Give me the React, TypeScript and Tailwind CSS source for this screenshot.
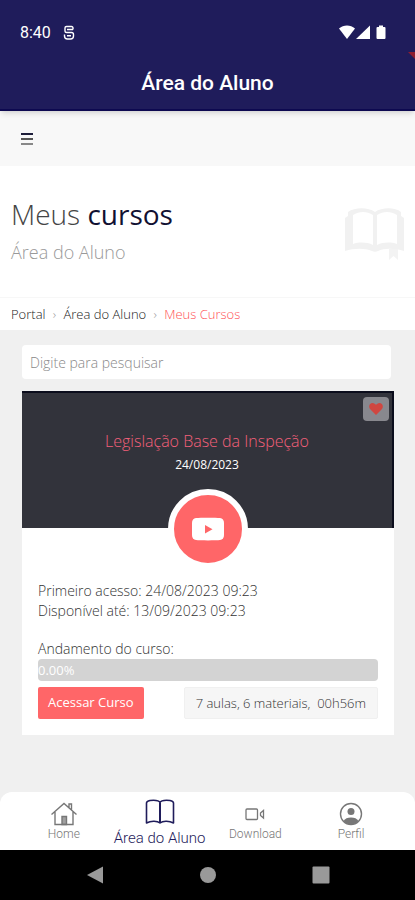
import { useState } from 'react'
import type { ReactNode } from 'react'

interface NavItem {
  label: string
  icon: ReactNode
}

const navItems: NavItem[] = [
  {
    label: 'Home',
    icon: (
      <svg className="w-7 h-6" viewBox="0 0 28 24" fill="none" stroke="currentColor" strokeWidth="1.4">
        <path d="M1.500 12.500L14 1.500l12.500 11M5 10v12.500h18V10M19 5.500V2h2.500v6" />
        <path d="M12 22.500v-8h4.500v8z" fill="currentColor" fillOpacity="0.7" />
      </svg>
    ),
  },
  {
    label: 'Área do Aluno',
    icon: (
      <svg className="w-8 h-7" viewBox="0 0 32 28" fill="none" stroke="currentColor" strokeWidth="1.6" strokeLinejoin="round">
        <path d="M16 4.500C15 2.500 11 2 6 2.500 3.500 3 2.500 3.500 2.500 5v20c4-2 10.500-2.500 13.500 0 3-2.500 9.500-2 13.500 0V5c0-1.500-1-2-3.500-2.500C21 2 17 2.500 16 4.500z" />
        <path d="M16 4.500v20.500" strokeWidth="2" />
      </svg>
    ),
  },
  {
    label: 'Download',
    icon: (
      <svg className="w-5 h-6" viewBox="0 0 20 24" fill="none" stroke="currentColor" strokeWidth="1.300">
        <rect x="1" y="7" width="11.500" height="10.500" rx="1" />
        <path d="M15.500 11l3-2.500v7.500l-3-2.500z" />
      </svg>
    ),
  },
  {
    label: 'Perfil',
    icon: (
      <svg className="w-6 h-6" viewBox="0 0 24 24" fill="none" stroke="currentColor" strokeWidth="1.400">
        <circle cx="12" cy="12" r="10.500" />
        <circle cx="12" cy="9.500" r="3.500" fill="currentColor" stroke="none" />
        <path d="M4.500 19c1.500-2.500 4-3.500 7.500-3.500s6 1 7.500 3.500c-4 4.500-11 4.500-15 0z" fill="currentColor" stroke="none" />
      </svg>
    ),
  },
]

function StatusBar() {
  return (
    <div className="flex items-center justify-between h-7 pl-5 pr-7 text-white">
      <div className="flex items-center gap-3">
        <span className="text-base leading-5">8:40</span>
        <svg className="w-3 h-4" viewBox="0 0 12 16" fill="none" stroke="currentColor" strokeWidth="1.400">
          <path d="M10 4.500V3c0-1-.5-1.500-1.500-1.500h-5C2.500 1.500 2 2 2 3v3c0 1 .5 1.500 1.500 1.500h5c1.500 0 2 .5 2 2V11c0 2-1.500 3-3 3h-3C3 14 1.500 13 1.500 11V9.500M4 4.500h6M4 10.700h4" />
        </svg>
      </div>
      <svg className="w-12 h-4" viewBox="0 0 48 16" fill="currentColor">
        <path d="M0 3.500C4.500-.5 11.500-.5 16 3.500L8 14z" />
        <path d="M31 .5v13.500H17z" />
        <path d="M38.500 2h1.500V.5h4V2h1.500a1 1 0 0 1 1 1v10a1 1 0 0 1-1 1h-7a1 1 0 0 1-1-1V3a1 1 0 0 1 1-1z" />
      </svg>
    </div>
  )
}

function AppHeader() {
  return (
    <header className="relative z-10 bg-[#1f1c5b] border-b-2 border-[#0d0950] pt-[19px] shadow-md font-[Roboto,sans-serif]">
      <StatusBar />
      <h1 className="pt-6 pb-[14px] text-center text-[21px] leading-6 font-medium text-white">Área do Aluno</h1>
      <svg className="absolute right-0 top-13 w-2 h-2" viewBox="0 0 8 8">
        <path d="M1 0h7v7z" fill="#8f1c30" />
      </svg>
    </header>
  )
}

function PageTitle() {
  return (
    <section className="flex items-start justify-between bg-white pl-[11px] pr-2 pt-7 pb-[29px]">
      <div>
        <h2 className="text-[28px] leading-10 font-light text-[#444]">
          Meus <span className="font-normal text-[#111132]">cursos</span>
        </h2>
        <p className="mt-0.5 text-lg leading-8 font-light text-[#999]">Área do Aluno</p>
      </div>
      <svg className="mt-3 w-16 h-14" viewBox="0 0 64 56">
        <path
          d="M2 12l3-2V6c7-5 20-5 27 0 7-5 20-5 26 0v4l3 2v33c-9-3-20-3-26 0-2 1-4 1-6 0-7-3-18-3-27 0zM10 9v29c6-2 14-2 20 1V9c-6-4-14-4-20 0zM34 9v30c6-3 14-3 20-1V9c-6-4-14-4-20 0z"
          fill="#f1f1f1"
          fillRule="evenodd"
        />
        <path d="M46 43h9v11l-4.500-4-4.500 4z" fill="#f3f3f3" />
      </svg>
    </section>
  )
}

function Breadcrumb() {
  return (
    <nav aria-label="Breadcrumb" className="bg-white border-t border-[#f7f7f7] px-[11px] py-2">
      <ol className="flex items-center text-[13px] leading-4 font-light text-[#222]">
        <li><a href="#portal">Portal</a></li>
        <li aria-hidden="true" className="w-[18px] text-center text-[#999]">›</li>
        <li><a href="#area">Área do Aluno</a></li>
        <li aria-hidden="true" className="w-[18px] text-center text-[#999]">›</li>
        <li><a href="#cursos" className="text-[#ff5055]">Meus Cursos</a></li>
      </ol>
    </nav>
  )
}

function CourseCard() {
  const [favorite, setFavorite] = useState<boolean>(true)

  return (
    <article className="bg-white text-[#333]">
      <div className="relative flex flex-col items-center bg-[#32333b] border-t-2 border-r-2 border-[#0b0d1c] pt-9 h-[137px]">
        <button
          className="absolute top-1 right-[3px] flex items-center justify-center w-[26px] h-6 rounded-sm bg-[#88888e] cursor-pointer"
          onClick={() => setFavorite(!favorite)}
          aria-pressed={favorite}
          aria-label="Favorito"
        >
          <svg className="w-[14px] h-3" viewBox="0 0 14 12" fill={favorite ? '#cf4640' : '#ccc'}>
            <path d="M7 12L1 6C-1 3 1 0 3.500 0 5 0 6.500 1 7 2c.5-1 2-2 3.500-2C13 0 15 3 13 6z" />
          </svg>
        </button>
        <h3 className="text-base leading-6 font-light text-[#f2607a]">Legislação Base da Inspeção</h3>
        <time className="text-xs leading-6 text-white">24/08/2023</time>
      </div>
      <div className="relative z-10 -mt-[39px] mx-auto flex items-center justify-center w-20 h-20 rounded-full border-6 border-white bg-[#ff6668]">
        <svg className="w-8 h-6" viewBox="0 0 32 24">
          <path d="M4 1C8 .5 24 .5 28 1c2.500.5 4 2 4 5v12c0 3-1.500 4.500-4 5-4 .5-20 .5-24 0-2.500-.5-4-2-4-5V6c0-3 1.500-4.500 4-5z" fill="#fff" />
          <path d="M13 8v8.500l7.500-4.200z" fill="#ff6668" />
        </svg>
      </div>
      <div className="px-4 pt-3 pb-4">
        <p className="text-sm leading-5 font-light">Primeiro acesso: 24/08/2023 09:23</p>
        <p className="text-sm leading-5 font-light">Disponível até: 13/09/2023 09:23</p>
        <p className="mt-[18px] text-sm leading-5 font-light">Andamento do curso:</p>
        <div
          role="progressbar"
          aria-label="Andamento do curso"
          aria-valuenow={0}
          className="rounded-sm bg-[#d3d3d3] text-[13px] leading-[22px] text-white"
        >
          0.00%
        </div>
        <div className="mt-1.5 flex items-center justify-between">
          <button className="h-8 px-2.5 rounded-xs bg-[#ff6668] text-[13px] text-white cursor-pointer">
            Acessar Curso
          </button>
          <span className="h-8 px-[11px] rounded-xs border border-[#f0f0f0] bg-[#f6f6f6] text-[13px] leading-[30px] font-light whitespace-pre">
            7 aulas, 6 materiais,  00h56m
          </span>
        </div>
      </div>
    </article>
  )
}

function BottomNav() {
  const [active, setActive] = useState<string>('Área do Aluno')

  return (
    <nav className="flex justify-between h-[58px] px-4 rounded-t-xl bg-white font-[Roboto,sans-serif]">
      {navItems.map((item) => (
        <button
          key={item.label}
          onClick={() => setActive(item.label)}
          className={
            active === item.label
              ? 'flex flex-1 flex-col items-center pt-1.5 text-[15px] leading-6 font-light text-[#1f1c5b] whitespace-nowrap cursor-pointer'
              : 'flex flex-1 flex-col items-center pt-2.5 text-xs leading-4 font-light text-[#777] cursor-pointer'
          }
        >
          {item.icon}
          {item.label}
        </button>
      ))}
    </nav>
  )
}

function SystemNav() {
  return (
    <div className="flex items-center justify-around h-[50px] px-[38px] bg-black text-[#999]">
      <button aria-label="Voltar">
        <svg className="w-5 h-5" viewBox="0 0 20 20" fill="currentColor"><path d="M18 1.500v17L2 10z" /></svg>
      </button>
      <button aria-label="Início">
        <svg className="w-5 h-5" viewBox="0 0 20 20" fill="currentColor"><circle cx="10" cy="10" r="8" /></svg>
      </button>
      <button aria-label="Recentes">
        <svg className="w-5 h-5" viewBox="0 0 20 20" fill="currentColor"><rect x="1.500" y="1.500" width="17" height="17" rx="1" /></svg>
      </button>
    </div>
  )
}

export default function App() {
  return (
    <div className="flex flex-col min-h-screen bg-[#f0f0f0] font-['Open_Sans',sans-serif]">
      <AppHeader />
      <div className="flex items-center h-[55px] px-5 bg-[#f8f8f8]">
        <button aria-label="Menu" className="cursor-pointer">
          <svg className="w-[14px] h-3" viewBox="0 0 14 12" strokeWidth="2">
            <path d="M1 1h12" stroke="#1d1d3a" />
            <path d="M1 6h12" stroke="#555" />
            <path d="M1 11h12" stroke="#888" />
          </svg>
        </button>
      </div>
      <PageTitle />
      <Breadcrumb />
      <main className="flex-1 pl-[22px] pr-[21px] pt-[15px]">
        <div className="mb-3 pr-[3px]">
          <input
            type="search"
            aria-label="Pesquisar"
            placeholder="Digite para pesquisar"
            className="block w-full h-[34px] px-2 rounded-sm bg-white text-sm font-light placeholder:text-[#888]"
          />
        </div>
        <CourseCard />
      </main>
      <BottomNav />
      <SystemNav />
    </div>
  )
}
